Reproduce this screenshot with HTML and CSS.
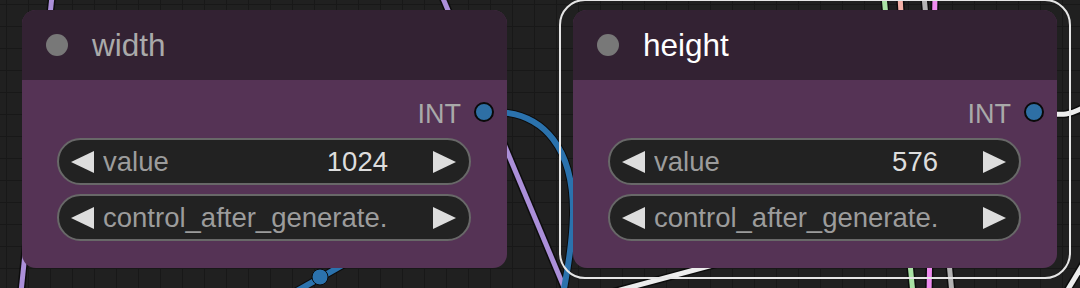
FILE: index.html
```html
<!DOCTYPE html>
<html lang="en">
<head>
    <meta charset="UTF-8">
    <title>Nodes</title>
    <link rel="stylesheet" href="styles.css">
</head>
<body>
    <div class="canvas">
        <!-- links behind the nodes -->
        <svg class="links" width="1080" height="288" viewBox="0 0 1080 288">
            <g class="edge">
                <line x1="52" y1="-4" x2="21" y2="292" />
                <line x1="442" y1="-4" x2="566" y2="292" />
                <path d="M494 112 C545 112 574 150 573 215 C572 250 567 272 563 294" />
                <line x1="288" y1="296" x2="348" y2="262" />
                <line x1="598" y1="296" x2="724" y2="262" />
                <path d="M1045 113 C1058 114 1066 118 1086 106" />
                <line x1="1064" y1="296" x2="1088" y2="256" />
                <line x1="884" y1="-4" x2="913" y2="294" />
                <line x1="900" y1="-4" x2="902" y2="30" />
                <line x1="924" y1="-4" x2="952" y2="294" />
                <line x1="935" y1="-4" x2="929" y2="294" />
            </g>
            <line class="wire purple" x1="52" y1="-4" x2="21" y2="292" />
            <line class="wire purple" x1="442" y1="-4" x2="566" y2="292" />
            <path class="wire blue" d="M494 112 C545 112 574 150 573 215 C572 250 567 272 563 294" />
            <line class="wire blue" x1="288" y1="296" x2="348" y2="262" />
            <circle class="marker" cx="320" cy="277" r="8" />
            <line class="wire white" x1="598" y1="296" x2="724" y2="262" />
            <path class="wire white" d="M1045 113 C1058 114 1066 118 1086 106" />
            <line class="wire white" x1="1064" y1="296" x2="1088" y2="256" />
            <line class="wire green" x1="884" y1="-4" x2="913" y2="294" />
            <line class="wire salmon" x1="900" y1="-4" x2="902" y2="30" />
            <line class="wire grey" x1="924" y1="-4" x2="952" y2="294" />
            <line class="wire pink" x1="935" y1="-4" x2="929" y2="294" />
        </svg>

        <div class="node node-width">
            <div class="node-title">
                <span class="title-dot"></span>
                <span class="title-text">width</span>
            </div>
            <div class="node-body">
                <div class="output">
                    <span class="output-name">INT</span>
                    <span class="slot"></span>
                </div>
                <div class="widgets">
                    <div class="widget">
                        <svg class="arrow" viewBox="0 0 23 22"><polygon points="0,11 23,0 23,22" /></svg>
                        <span class="label">value</span>
                        <span class="val">1024</span>
                        <svg class="arrow" viewBox="0 0 23 22"><polygon points="23,11 0,0 0,22" /></svg>
                    </div>
                    <div class="widget">
                        <svg class="arrow" viewBox="0 0 23 22"><polygon points="0,11 23,0 23,22" /></svg>
                        <span class="label">control_after_generate.</span>
                        <svg class="arrow" viewBox="0 0 23 22"><polygon points="23,11 0,0 0,22" /></svg>
                    </div>
                </div>
            </div>
        </div>

        <div class="selection"></div>

        <div class="node node-height selected">
            <div class="node-title">
                <span class="title-dot"></span>
                <span class="title-text">height</span>
            </div>
            <div class="node-body">
                <div class="output">
                    <span class="output-name">INT</span>
                    <span class="slot"></span>
                </div>
                <div class="widgets">
                    <div class="widget">
                        <svg class="arrow" viewBox="0 0 23 22"><polygon points="0,11 23,0 23,22" /></svg>
                        <span class="label">value</span>
                        <span class="val">576</span>
                        <svg class="arrow" viewBox="0 0 23 22"><polygon points="23,11 0,0 0,22" /></svg>
                    </div>
                    <div class="widget">
                        <svg class="arrow" viewBox="0 0 23 22"><polygon points="0,11 23,0 23,22" /></svg>
                        <span class="label">control_after_generate.</span>
                        <svg class="arrow" viewBox="0 0 23 22"><polygon points="23,11 0,0 0,22" /></svg>
                    </div>
                </div>
            </div>
        </div>
    </div>
</body>
</html>
```

FILE: styles.css
```css
* {
    margin: 0;
    padding: 0;
    box-sizing: border-box;
}

body {
    width: 1080px;
    height: 288px;
    overflow: hidden;
    background: #202020;
    font-family: 'Liberation Sans', Arial, sans-serif;
}

.canvas {
    position: relative;
    width: 1080px;
    height: 288px;
    overflow: hidden;
    background-color: #202020;
    background-image:
        linear-gradient(to right, #181818 1px, transparent 1px),
        linear-gradient(to bottom, #181818 1px, transparent 1px);
    background-size: 22px 22px;
    background-position: 6px 4px;
}

/* links */
.links {
    position: absolute;
    top: 0;
    left: 0;
}

.edge line,
.edge path {
    fill: none;
    stroke: #0c0c0c;
    stroke-width: 8;
}

.wire {
    fill: none;
    stroke-width: 5;
}

.purple { stroke: #ab8fd9; }
.blue { stroke: #2b72ad; stroke-width: 6; }
.white { stroke: #ececec; }
.green { stroke: #a9e2a4; }
.salmon { stroke: #f2b0a6; }
.grey { stroke: #b4b4b4; }
.pink { stroke: #f08cf0; }

.marker {
    fill: #2b72ad;
    stroke: #0c0c0c;
    stroke-width: 1;
}

/* nodes */
.node {
    position: absolute;
    top: 10px;
    width: 485px;
    height: 258px;
    border-radius: 14px;
    overflow: hidden;
    display: flex;
    flex-direction: column;
    background: #553355;
}

.node-width {
    left: 22px;
}

.node-height {
    left: 573px;
    width: 484px;
}

.selection {
    position: absolute;
    left: 559px;
    top: -1px;
    width: 512px;
    height: 280px;
    border: 2px solid #e6e6e6;
    border-radius: 26px;
}

.node-title {
    height: 70px;
    flex-shrink: 0;
    background: #332233;
    display: flex;
    align-items: center;
    padding-left: 24px;
    gap: 24px;
}

.title-dot {
    width: 22px;
    height: 22px;
    border-radius: 50%;
    background: #787878;
}

.title-text {
    font-size: 31.5px;
    color: #aaaaaa;
}

.selected .title-text {
    color: #ffffff;
}

.node-body {
    flex: 1;
    display: flex;
    flex-direction: column;
    padding: 16px 13px 0 35px;
}

.output {
    height: 32px;
    display: flex;
    align-items: center;
    justify-content: flex-end;
    gap: 13px;
}

.output-name {
    font-size: 27px;
    color: #a9a9a9;
    padding-top: 4px;
}

.slot {
    width: 20px;
    height: 20px;
    border-radius: 50%;
    background: #2e6fa4;
    border: 2px solid #0a0a0a;
}

.widgets {
    margin-top: 10px;
    margin-right: 23px;
    display: flex;
    flex-direction: column;
    gap: 9px;
}

.widget {
    height: 47px;
    border: 2px solid #686868;
    border-radius: 24px;
    background: #222222;
    display: flex;
    align-items: center;
    padding: 0 13px 0 12px;
    font-size: 27.5px;
    white-space: nowrap;
}

.arrow {
    width: 23px;
    height: 22px;
    flex-shrink: 0;
    fill: #dddddd;
}

.label {
    flex: 1;
    margin-left: 9px;
    color: #9c9c9c;
    overflow: hidden;
}

.val {
    color: #dddddd;
    margin-right: 45px;
}

.label + .arrow {
    margin-left: 45px;
}
```
